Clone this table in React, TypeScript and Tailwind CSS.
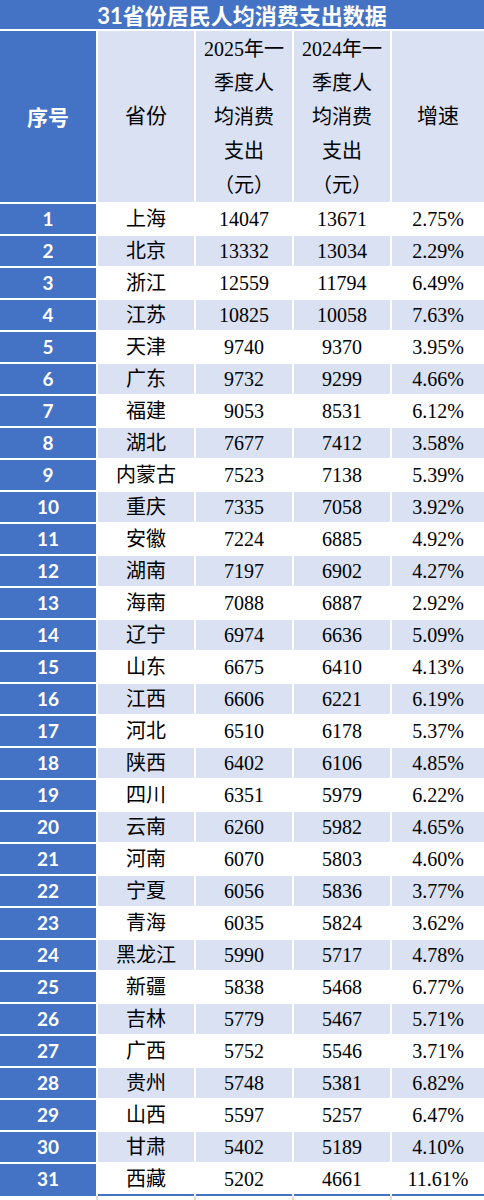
const rows: [string, string, string, string][] = [
  ["上海", "14047", "13671", "2.75%"],
  ["北京", "13332", "13034", "2.29%"],
  ["浙江", "12559", "11794", "6.49%"],
  ["江苏", "10825", "10058", "7.63%"],
  ["天津", "9740", "9370", "3.95%"],
  ["广东", "9732", "9299", "4.66%"],
  ["福建", "9053", "8531", "6.12%"],
  ["湖北", "7677", "7412", "3.58%"],
  ["内蒙古", "7523", "7138", "5.39%"],
  ["重庆", "7335", "7058", "3.92%"],
  ["安徽", "7224", "6885", "4.92%"],
  ["湖南", "7197", "6902", "4.27%"],
  ["海南", "7088", "6887", "2.92%"],
  ["辽宁", "6974", "6636", "5.09%"],
  ["山东", "6675", "6410", "4.13%"],
  ["江西", "6606", "6221", "6.19%"],
  ["河北", "6510", "6178", "5.37%"],
  ["陕西", "6402", "6106", "4.85%"],
  ["四川", "6351", "5979", "6.22%"],
  ["云南", "6260", "5982", "4.65%"],
  ["河南", "6070", "5803", "4.60%"],
  ["宁夏", "6056", "5836", "3.77%"],
  ["青海", "6035", "5824", "3.62%"],
  ["黑龙江", "5990", "5717", "4.78%"],
  ["新疆", "5838", "5468", "6.77%"],
  ["吉林", "5779", "5467", "5.71%"],
  ["广西", "5752", "5546", "3.71%"],
  ["贵州", "5748", "5381", "6.82%"],
  ["山西", "5597", "5257", "6.47%"],
  ["甘肃", "5402", "5189", "4.10%"],
  ["西藏", "5202", "4661", "11.61%"],
];

const serif = "font-['Liberation_Serif','Noto_Sans_CJK_SC',serif]";
const sans = "font-['Lato','Noto_Sans_CJK_SC',sans-serif]";

export default function App() {
  return (
    <div className="w-[484px] bg-white">
      <div className="grid grid-cols-[96px_96px_96px_96px_92px] gap-[2px] bg-white">
        {/* 标题 */}
        <div
          className={`col-span-5 h-[29px] bg-[#4472C4] text-white text-[22px] font-bold leading-[29px] pt-[1px] text-center ${sans}`}
        >
          31省份居民人均消费支出数据
        </div>

        {/* 表头 */}
        <div
          className={`h-[171px] bg-[#4472C4] text-white text-[21px] font-bold flex items-center justify-center ${sans}`}
        >
          序号
        </div>
        <div
          className={`h-[171px] bg-[#D9E1F2] text-black text-[21px] flex items-center justify-center ${serif}`}
        >
          省份
        </div>
        {["2025", "2024"].map((y) => (
          <div
            key={y}
            className={`h-[171px] bg-[#D9E1F2] text-black text-[20px] leading-[34px] flex flex-col items-center justify-center ${serif}`}
          >
            <span>{y}年一</span>
            <span>季度人</span>
            <span>均消费</span>
            <span>支出</span>
            <span>（元）</span>
          </div>
        ))}
        <div
          className={`h-[171px] bg-[#D9E1F2] text-black text-[21px] flex items-center justify-center ${serif}`}
        >
          增速
        </div>

        {/* 数据行 */}
        {rows.map((r, i) => {
          const shaded = i % 2 === 1;
          const last = i === rows.length - 1;
          const cell = `${last ? "h-[32px] border-b-2 border-[#4472C4]" : "h-[30px]"} ${
            shaded ? "bg-[#D9E1F2]" : "bg-white"
          } text-black text-[20px] leading-[30px] text-center ${serif}`;
          return [
            <div
              key={`n${i}`}
              className={`${last ? "h-[32px]" : "h-[30px]"} bg-[#4472C4] text-white text-[19px] font-bold leading-[30px] text-center ${sans}`}
            >
              {i + 1}
            </div>,
            ...r.map((v, j) => (
              <div key={`c${i}-${j}`} className={cell}>
                {v}
              </div>
            )),
          ];
        })}
      </div>
      <div className="grid grid-cols-[96px_96px_96px_96px_92px] gap-x-[2px] bg-[#dcdcdc]">
        <div className="h-[4px] bg-white" />
        <div className="h-[4px] bg-white" />
        <div className="h-[4px] bg-white" />
        <div className="h-[4px] bg-white" />
        <div className="h-[4px] bg-white" />
      </div>
    </div>
  );
}
